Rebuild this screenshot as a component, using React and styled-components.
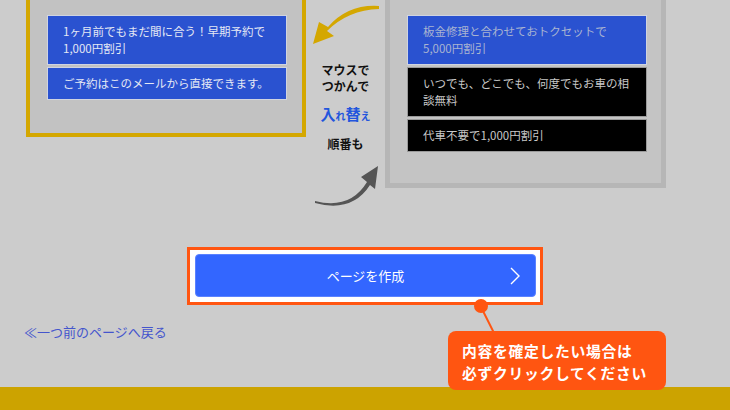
import React from 'react';
import styled, { createGlobalStyle } from 'styled-components';

const GlobalStyle = createGlobalStyle`
    html, body {
        margin: 0;
        padding: 0;
        background: #cccccc;
        font-family: "Noto Sans CJK JP", "Noto Sans", sans-serif;
    }
`;

const leftItems = [
    { id: 1, lines: ['1ヶ月前でもまだ間に合う！早期予約で', '1,000円割引'], tone: 'blue' },
    { id: 2, lines: ['ご予約はこのメールから直接できます。'], tone: 'blue' },
];

const rightItems = [
    { id: 3, lines: ['板金修理と合わせておトクセットで', '5,000円割引'], tone: 'muted' },
    { id: 4, lines: ['いつでも、どこでも、何度でもお車の相', '談無料'], tone: 'black' },
    { id: 5, lines: ['代車不要で1,000円割引'], tone: 'black' },
];

function ItemList({ items }) {
    return (
        <List>
            {items.map(item => (
                <Item key={item.id} tone={item.tone}>
                    {item.lines.map((line, i) => <div key={i}>{line}</div>)}
                </Item>
            ))}
        </List>
    );
}

function App() {
    return (
        <Page>
            <GlobalStyle />
            <TopRow>
                <Panel variant='active'>
                    <ItemList items={leftItems} />
                </Panel>
                <Middle>
                    <svg width='79' height='50' viewBox='0 0 79 50'>
                        <path d='M73,6 Q42,4 22,27 L13,22 L7,44 L28,36 L21,31 Q42,10 73,9 Z' fill='#d4a700' />
                    </svg>
                    <Hint>マウスで<br />つかんで</Hint>
                    <Swap>入<small>れ</small>替<small>え</small></Swap>
                    <Hint>順番も</Hint>
                    <svg width='79' height='50' viewBox='0 0 79 50'>
                        <path d='M9,42 Q44,51 61,23 L55,18 L72,7 L69,30 L64,26 Q46,54 9,44 Z' fill='#555555' />
                    </svg>
                </Middle>
                <Panel variant='idle'>
                    <ItemList items={rightItems} />
                </Panel>
            </TopRow>

            <ButtonFrame>
                <CreateButton>
                    ページを作成
                    <Chevron width='12' height='20' viewBox='0 0 12 20'>
                        <path d='M2,2 L10,10 L2,18' fill='none' stroke='#ffffff' strokeWidth='1.4' />
                    </Chevron>
                </CreateButton>
                <Pin />
                <PinLine width='20' height='30' viewBox='0 0 20 30'>
                    <line x1='2' y1='2' x2='15' y2='28' stroke='#ff5511' strokeWidth='2' />
                </PinLine>
                <Bubble>
                    <div>内容を確定したい場合は</div>
                    <div>必ずクリックしてください</div>
                </Bubble>
            </ButtonFrame>

            <BackLink>≪一つ前のページへ戻る</BackLink>

            <Footer />
        </Page>
    );
}

export default App;

const Page = styled.div`
    height: 410px;
    display: flex;
    flex-direction: column;
    overflow: hidden;
`;

const TopRow = styled.div`
    display: flex;
    align-items: flex-start;
    padding-left: 26px;
    height: 210px;
`;

const Panel = styled.div`
    box-sizing: border-box;
    width: ${props => props.variant === 'active' ? '280px' : '281px'};
    background: ${props => props.variant === 'active' ? '#c2c2c2' : '#c4c4c4'};
    border: ${props => props.variant === 'active' ? '4px solid #d4a700' : '5px solid #b6b6b6'};
    border-top: none;
    padding: 15px 14px ${props => props.variant === 'active' ? '33px' : '31px'} 17px;
`;

const List = styled.div`
    display: flex;
    flex-direction: column;
    gap: 2px;
    width: 240px;
`;

const Item = styled.div`
    box-sizing: border-box;
    border: 1px solid ${props => props.tone === 'black' ? '#9a9a9a' : '#d0d4e0'};
    background: ${props => props.tone === 'black' ? '#000000' : '#2a52d0'};
    color: ${props => props.tone === 'blue' ? '#e4e8f4' : props.tone === 'muted' ? '#a9b4d0' : '#c8c8c8'};
    font-size: 11.5px;
    line-height: 17px;
    padding: 7px 10px 7px 15px;
    white-space: nowrap;
`;

const Middle = styled.div`
    width: 79px;
    display: flex;
    flex-direction: column;
    align-items: center;
    svg {
        display: block;
    }
`;

const Hint = styled.div`
    font-size: 12px;
    font-weight: bold;
    line-height: 16px;
    color: #111111;
    text-align: center;
    margin-top: 12px;
    &:last-of-type {
        margin-top: 10px;
        margin-bottom: 7px;
    }
`;

const Swap = styled.div`
    margin-top: 10px;
    font-size: 15px;
    font-weight: bold;
    line-height: 20px;
    color: #2255dd;
    small {
        font-size: 10px;
    }
`;

const ButtonFrame = styled.div`
    position: relative;
    box-sizing: border-box;
    align-self: center;
    width: 356px;
    height: 58px;
    margin-top: 37px;
    background: #ffffff;
    border: 3px solid #ff5511;
    padding: 4px 4px 5px 5px;
`;

const CreateButton = styled.button`
    position: relative;
    width: 100%;
    height: 100%;
    box-sizing: border-box;
    border: 1px solid #5b82ff;
    border-radius: 4px;
    background: #3366ff;
    color: #ffffff;
    font-family: "Noto Sans CJK JP", sans-serif;
    font-size: 13px;
    cursor: pointer;
`;

const Chevron = styled.svg`
    position: absolute;
    right: 14px;
    top: 11px;
`;

const Pin = styled.div`
    position: absolute;
    left: 284px;
    top: 49px;
    width: 14px;
    height: 14px;
    border-radius: 50%;
    background: #ff5511;
`;

const PinLine = styled.svg`
    position: absolute;
    left: 289px;
    top: 55px;
`;

const Bubble = styled.div`
    position: absolute;
    left: 258px;
    top: 81px;
    width: 218px;
    height: 59px;
    box-sizing: border-box;
    padding: 9px 0 0 14px;
    background: #ff5511;
    border-radius: 8px;
    color: #ffffff;
    font-size: 14.8px;
    font-weight: bold;
    letter-spacing: 0.7px;
    line-height: 21.5px;
    white-space: nowrap;
    z-index: 2;
`;

const BackLink = styled.a`
    margin: 18px 0 0 24px;
    font-size: 13px;
    line-height: 18px;
    color: #4455cc;
    cursor: pointer;
`;

const Footer = styled.div`
    margin-top: auto;
    height: 23px;
    background: #cca300;
`;
